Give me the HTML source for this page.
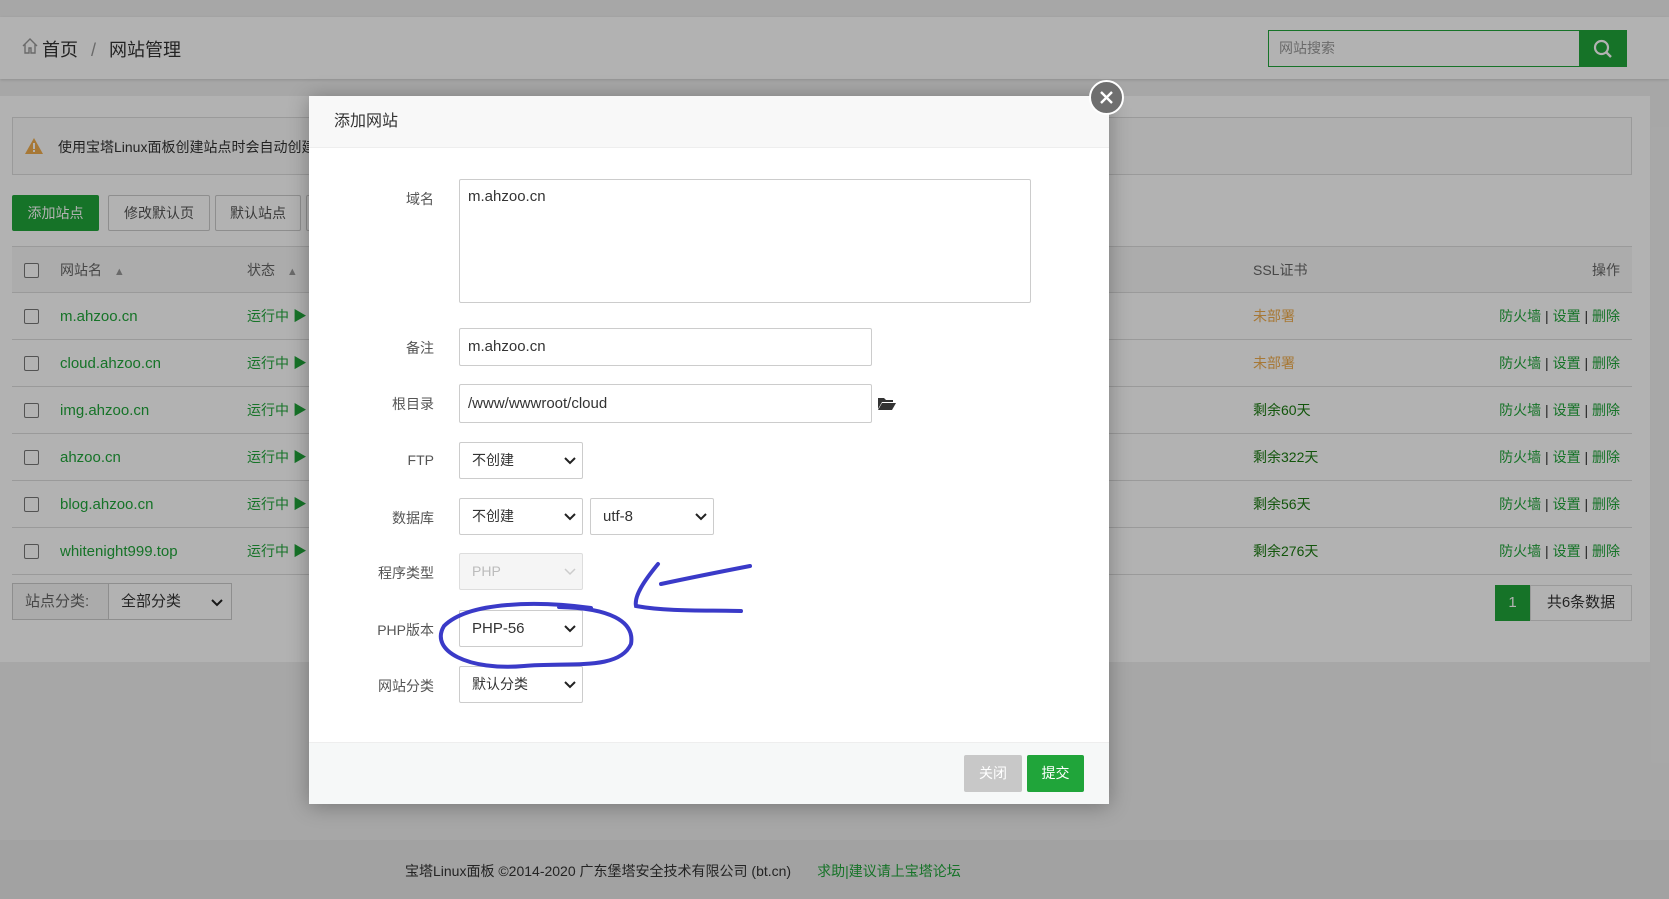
<!DOCTYPE html>
<html><head><meta charset="utf-8"><style>
*{box-sizing:border-box;margin:0;padding:0}
body{width:1669px;height:899px;overflow:hidden;position:relative;background:#f0f0f0;font-family:"Liberation Sans","Noto Sans CJK SC",sans-serif;color:#333;font-size:14px}
.abs{position:absolute}
.g{color:#20a53a}
.hdr{left:0;top:17px;width:1669px;height:62px;background:#fff;box-shadow:0 1px 3px rgba(0,0,0,.15)}
.content{left:0;top:96px;width:1650px;height:566px;background:#fff}
.foot{left:0;top:840px;width:1669px;height:59px;background:#e8e8e8}
.btn{position:absolute;height:36px;border:1px solid #ccc;border-radius:2px;font-size:14px;line-height:34px;text-align:center;color:#555;background:#fff}
.row{position:absolute;left:12px;width:1620px;height:47px;border-bottom:1px solid #ddd;font-size:15px;line-height:47px}
.cb{position:absolute;left:12px;top:16px;width:15px;height:15px;border:1px solid #777;border-radius:2px;background:#fff}
.ov{left:0;top:0;width:1669px;height:899px;background:rgba(0,0,0,.3)}
.modal{left:309px;top:96px;width:800px;height:708px;background:#fff;box-shadow:0 2px 20px rgba(0,0,0,.3)}
.lab{position:absolute;right:675px;font-size:14px;color:#555;text-align:right}
.inp{position:absolute;border:1px solid #ccc;border-radius:2px;background:#fff;font-size:15px;color:#333;padding-left:8px}
.sel{position:absolute;height:37px;border:1px solid #ccc;border-radius:2px;background:#fff;font-size:14px;line-height:35px;padding-left:12px;color:#333}
.sel svg{position:absolute;right:6px;top:13px}
</style></head><body>
<div class="abs hdr">
 <svg class="abs" style="left:21px;top:20px" width="18" height="18" viewBox="0 0 18 18"><path d="M2 9 L9 2 L16 9 M4 7 V16 H8 V11 H10 V16 H14 V7" fill="none" stroke="#999" stroke-width="1.4"/></svg>
 <div class="abs" style="left:42px;top:19px;font-size:18px;color:#333">首页 <span style="color:#999;margin:0 8px">/</span> 网站管理</div>
 <div class="abs" style="left:1268px;top:13px;width:312px;height:37px;border:1px solid #20a53a;background:#fff;font-size:14px;color:#999;line-height:35px;padding-left:10px">网站搜索</div>
 <div class="abs" style="left:1580px;top:13px;width:47px;height:37px;background:#20a53a"><svg style="margin:9px 13px" width="20" height="20" viewBox="0 0 20 20"><circle cx="8.5" cy="8.5" r="6.5" fill="none" stroke="#fff" stroke-width="2.2"/><path d="M13 13 L18 18" stroke="#fff" stroke-width="2.4"/></svg></div>
</div>
<div class="abs content">
 <div class="abs" style="left:12px;top:21px;width:1620px;height:58px;border:1px solid #ddd;background:#fbfbfb">
  <svg class="abs" style="left:12px;top:20px" width="18" height="16" viewBox="0 0 18 16"><path d="M9 0 L18 16 H0 Z" fill="#f0ad4e"/><rect x="8" y="5" width="2" height="6" fill="#fff"/><rect x="8" y="12" width="2" height="2" fill="#fff"/></svg>
  <div class="abs" style="left:45px;top:19px;font-size:14px;color:#333">使用宝塔Linux面板创建站点时会自动创建权限配置</div>
 </div>
 <div class="btn" style="left:12px;top:99px;width:87px;background:#20a53a;border-color:#20a53a;color:#fff">添加站点</div>
 <div class="btn" style="left:108px;top:99px;width:102px">修改默认页</div>
 <div class="btn" style="left:215px;top:99px;width:86px">默认站点</div>
 <div class="btn" style="left:306px;top:99px;width:86px">PHP</div>
 <div class="row" style="top:150px;background:#f6f6f6;border-top:1px solid #ddd;font-size:14px;color:#666"><div class="cb"></div><span class="abs" style="left:48px">网站名 <span style="color:#999;font-size:11px;margin-left:8px">▲</span></span><span class="abs" style="left:235px">状态 <span style="color:#999;font-size:11px;margin-left:8px">▲</span></span><span class="abs" style="left:1241px">SSL证书</span><span class="abs" style="right:12px">操作</span></div>
 <div class="row" style="top:197px"><div class="cb"></div><span class="abs g" style="left:48px">m.ahzoo.cn</span><span class="abs g" style="left:235px;font-size:14px">运行中 ▶</span><span class="abs" style="left:1241px;color:#f0ad4e;font-size:14px">未部署</span><span class="abs g" style="right:12px;font-size:14px">防火墙 <span style="color:#333">|</span> 设置 <span style="color:#333">|</span> 删除</span></div>
 <div class="row" style="top:244px"><div class="cb"></div><span class="abs g" style="left:48px">cloud.ahzoo.cn</span><span class="abs g" style="left:235px;font-size:14px">运行中 ▶</span><span class="abs" style="left:1241px;color:#f0ad4e;font-size:14px">未部署</span><span class="abs g" style="right:12px;font-size:14px">防火墙 <span style="color:#333">|</span> 设置 <span style="color:#333">|</span> 删除</span></div>
 <div class="row" style="top:291px"><div class="cb"></div><span class="abs g" style="left:48px">img.ahzoo.cn</span><span class="abs g" style="left:235px;font-size:14px">运行中 ▶</span><span class="abs" style="left:1241px;color:#1a7a10;font-size:14px">剩余60天</span><span class="abs g" style="right:12px;font-size:14px">防火墙 <span style="color:#333">|</span> 设置 <span style="color:#333">|</span> 删除</span></div>
 <div class="row" style="top:338px"><div class="cb"></div><span class="abs g" style="left:48px">ahzoo.cn</span><span class="abs g" style="left:235px;font-size:14px">运行中 ▶</span><span class="abs" style="left:1241px;color:#1a7a10;font-size:14px">剩余322天</span><span class="abs g" style="right:12px;font-size:14px">防火墙 <span style="color:#333">|</span> 设置 <span style="color:#333">|</span> 删除</span></div>
 <div class="row" style="top:385px"><div class="cb"></div><span class="abs g" style="left:48px">blog.ahzoo.cn</span><span class="abs g" style="left:235px;font-size:14px">运行中 ▶</span><span class="abs" style="left:1241px;color:#1a7a10;font-size:14px">剩余56天</span><span class="abs g" style="right:12px;font-size:14px">防火墙 <span style="color:#333">|</span> 设置 <span style="color:#333">|</span> 删除</span></div>
 <div class="row" style="top:432px"><div class="cb"></div><span class="abs g" style="left:48px">whitenight999.top</span><span class="abs g" style="left:235px;font-size:14px">运行中 ▶</span><span class="abs" style="left:1241px;color:#1a7a10;font-size:14px">剩余276天</span><span class="abs g" style="right:12px;font-size:14px">防火墙 <span style="color:#333">|</span> 设置 <span style="color:#333">|</span> 删除</span></div>
 <div class="abs" style="left:12px;top:487px;width:219px;height:37px;border:1px solid #ccc;background:#f5f5f5;font-size:15px;line-height:35px;color:#666"><span style="margin-left:12px">站点分类:</span><div class="abs" style="left:95px;top:-1px;width:124px;height:37px;border:1px solid #ccc;background:#fff;padding-left:12px;color:#333">全部分类<svg class="abs" style="right:8px;top:14px" width="12" height="9" viewBox="0 0 12 9"><path d="M1 2 L6 7 L11 2" fill="none" stroke="#222" stroke-width="2"/></svg></div></div>
 <div class="abs" style="left:1495px;top:489px;width:35px;height:36px;background:#20a53a;color:#fff;text-align:center;line-height:36px;font-size:15px">1</div>
 <div class="abs" style="left:1530px;top:489px;width:102px;height:36px;border:1px solid #ddd;text-align:center;line-height:34px;font-size:15px">共6条数据</div>
</div>
<div class="abs foot"><div class="abs" style="left:405px;top:21px;font-size:14px;color:#333">宝塔Linux面板 ©2014-2020 广东堡塔安全技术有限公司 (bt.cn)<span class="g" style="margin-left:26px">求助|建议请上宝塔论坛</span></div></div>
<div class="abs ov"></div>

<div class="abs modal">
 <div class="abs" style="left:0;top:0;width:800px;height:52px;background:#f8f8f8;border-bottom:1px solid #eee;font-size:16px;line-height:52px;padding-left:25px;color:#333">添加网站</div>
 <div class="lab" style="top:93px">域名</div>
 <div class="inp" style="left:150px;top:83px;width:572px;height:124px;padding-top:8px">m.ahzoo.cn</div>
 <div class="lab" style="top:242px">备注</div>
 <div class="inp" style="left:150px;top:232px;width:413px;height:38px;line-height:36px">m.ahzoo.cn</div>
 <div class="lab" style="top:298px">根目录</div>
 <div class="inp" style="left:150px;top:288px;width:413px;height:39px;line-height:37px">/www/wwwroot/cloud</div>
 <svg class="abs" style="left:568px;top:299px" width="20" height="16" viewBox="0 0 20 16"><path d="M1 3 H7 L9 5 H16 V7 H5 L1 14 Z" fill="#333"/><path d="M5 8 H19 L15 15 H1 Z" fill="#333"/></svg>
 <div class="lab" style="top:356px">FTP</div>
 <div class="sel" style="left:150px;top:346px;width:124px">不创建<svg width="12" height="9" viewBox="0 0 12 9"><path d="M1 2 L6 7 L11 2" fill="none" stroke="#222" stroke-width="2"/></svg></div>
 <div class="lab" style="top:412px">数据库</div>
 <div class="sel" style="left:150px;top:402px;width:124px">不创建<svg width="12" height="9" viewBox="0 0 12 9"><path d="M1 2 L6 7 L11 2" fill="none" stroke="#222" stroke-width="2"/></svg></div>
 <div class="sel" style="left:281px;top:402px;width:124px;font-size:15px">utf-8<svg width="12" height="9" viewBox="0 0 12 9"><path d="M1 2 L6 7 L11 2" fill="none" stroke="#222" stroke-width="2"/></svg></div>
 <div class="lab" style="top:467px">程序类型</div>
 <div class="sel" style="left:150px;top:457px;width:124px;background:#f5f5f5;border-color:#ddd;color:#bbb">PHP<svg width="12" height="9" viewBox="0 0 12 9"><path d="M1 2 L6 7 L11 2" fill="none" stroke="#ccc" stroke-width="1.5"/></svg></div>
 <div class="lab" style="top:524px">PHP版本</div>
 <div class="sel" style="left:150px;top:514px;width:124px;font-size:15px">PHP-56<svg width="12" height="9" viewBox="0 0 12 9"><path d="M1 2 L6 7 L11 2" fill="none" stroke="#222" stroke-width="2"/></svg></div>
 <div class="lab" style="top:580px">网站分类</div>
 <div class="sel" style="left:150px;top:570px;width:124px">默认分类<svg width="12" height="9" viewBox="0 0 12 9"><path d="M1 2 L6 7 L11 2" fill="none" stroke="#222" stroke-width="2"/></svg></div>
 <div class="abs" style="left:0;top:646px;width:800px;height:62px;background:#f6f8f8;border-top:1px solid #eee"></div>
 <div class="abs" style="left:655px;top:659px;width:58px;height:37px;background:#c8c8c8;border-radius:2px;color:#fff;text-align:center;line-height:37px;font-size:14px">关闭</div>
 <div class="abs" style="left:718px;top:659px;width:57px;height:37px;background:#20a53a;border-radius:2px;color:#fff;text-align:center;line-height:37px;font-size:14px">提交</div>
 <svg class="abs" style="left:0;top:0;overflow:visible" width="800" height="708"><path d="M441 470 C410 476 380 482 352 488 M349 468 C335 485 325 500 327 510 C360 516 400 514 432 515 M282 512 C230 505 160 505 135 530 C120 555 160 575 215 570 C260 566 310 575 322 548 C326 525 300 512 250 511" fill="none" stroke="#3a3ac8" stroke-width="4" stroke-linecap="round"/></svg>
</div>
<div class="abs" style="left:1089px;top:80px;width:35px;height:35px;border-radius:50%;background:#6f6f6f;border:2.5px solid #fff"><svg style="position:absolute;left:8px;top:8px" width="15" height="15" viewBox="0 0 15 15"><path d="M2 2 L13 13 M13 2 L2 13" stroke="#fff" stroke-width="2.4"/></svg></div>
</body></html>
